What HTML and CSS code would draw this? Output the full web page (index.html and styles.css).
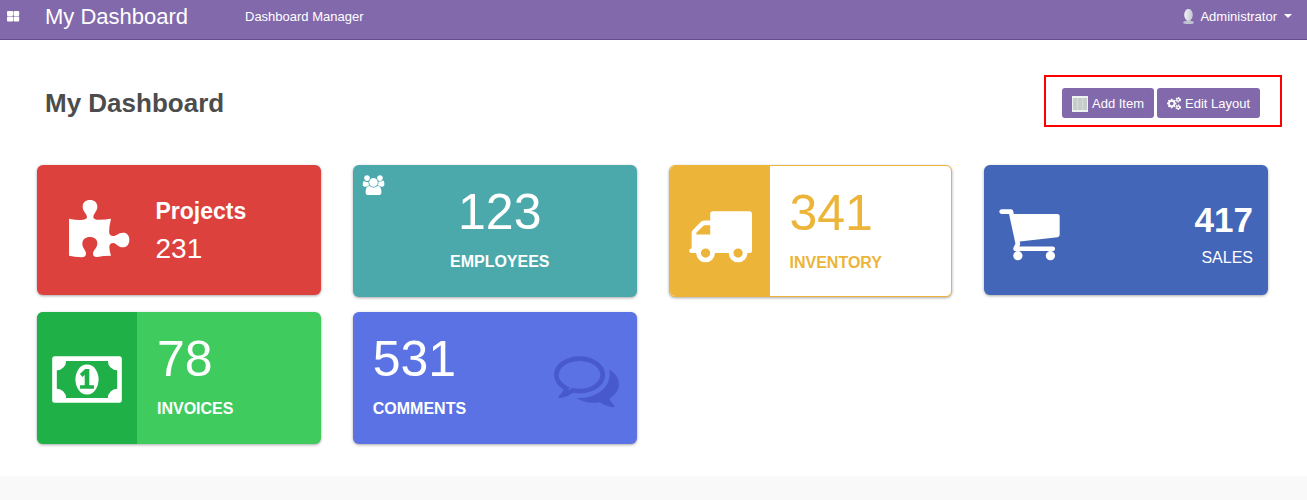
FILE: index.html
```html
<!DOCTYPE html>
<html lang="en">
<head>
<meta charset="utf-8">
<title>My Dashboard</title>
<link rel="stylesheet" href="styles.css">
</head>
<body>
<header class="navbar">
  <svg class="apps" viewBox="0 0 13 11"><rect x="0" y="0" width="6" height="5" rx="1"/><rect x="6.5" y="0" width="5.700" height="5" rx="1"/><rect x="0" y="5.600" width="6" height="4.900" rx="1"/><rect x="6.500" y="5.600" width="5.700" height="4.900" rx="1"/></svg>
  <span class="brand">My Dashboard</span>
  <span class="menu">Dashboard Manager</span>
  <span class="user">
    <svg class="avatar" viewBox="0 0 11 15"><defs><linearGradient id="silver"><stop offset="0" stop-color="#f2f3f4"/><stop offset="1" stop-color="#c3c7d0"/></linearGradient></defs><ellipse cx="5.500" cy="13.400" rx="5.400" ry="1.600" fill="#c0c3d1"/><path d="M3.500 10h4v3h-4z" fill="#bfc3cd"/><ellipse cx="5.500" cy="5.800" rx="4.300" ry="5.900" fill="url(#silver)"/></svg>
    <span>Administrator</span>
    <i class="caret"></i>
  </span>
</header>
<main class="page">
  <div class="heading">
    <h1>My Dashboard</h1>
    <div class="actions">
      <button class="btn add"><svg class="table-icon" viewBox="0 0 16 16"><path fill="#eef3f0" d="M0 0h16v16H0z"/><path fill="#c6ccc9" d="M1 2h14v12H1z"/><path stroke="#dce2df" stroke-width=".8" d="M5.700 2v12M10.400 2v12"/></svg><span>Add Item</span></button>
      <button class="btn edit"><svg class="cogs" viewBox="0 0 1920 1792"><path fill-rule="evenodd" d="M896 896q0-106-75-181t-181-75-181 75-75 181 75 181 181 75 181-75 75-181zm384-91v185q0 10-7 19.500t-16 10.500l-155 24q-11 35-32 76 34 48 90 115 7 11 7 20 0 12-7 19-23 30-82.500 89.500t-78.500 59.500q-11 0-21-7l-115-90q-37 19-77 31-11 108-23 155-7 24-30 24h-186q-11 0-20-7.500t-10-17.500l-23-153q-34-10-75-31l-118 89q-7 7-20 7-11 0-21-8-144-133-144-160 0-9 7-19 10-14 41-53t47-61q-23-44-35-82l-152-24q-10-1-17-9.500t-7-19.500v-185q0-10 7-19.500t16-10.500l155-24q11-35 32-76-34-48-90-115-7-11-7-20 0-12 7-20 22-30 82-89t79-59q11 0 21 7l115 90q34-18 77-32 11-108 23-154 7-24 30-24h186q11 0 20 7.500t10 17.500l23 153q34 10 75 31l118-89q8-7 20-7 11 0 21 8 144 133 144 160 0 8-7 19-12 16-42 54t-45 60q23 48 34 82l152 23q10 2 17 10.500t7 19.500z"/><g fill="none" stroke="#fff"><circle cx="1536" cy="384" r="200" stroke-width="170"/><circle cx="1536" cy="1408" r="200" stroke-width="170"/><circle cx="1536" cy="384" r="320" stroke-width="140" stroke-dasharray="190 145.100"/><circle cx="1536" cy="1408" r="320" stroke-width="140" stroke-dasharray="190 145.100"/></g></svg><span>Edit Layout</span></button>
    </div>
  </div>
  <section class="grid">
    <article class="card projects">
      <svg class="puzzle" viewBox="114 132 186 180"><path d="M117 191Q145 197 160 194Q170 193 171 187C171 175 158 170 158 155C158 142 167 135 180 135C193 135 202 143 202 155C202 169 190 175 190 186Q190 193 200 194Q222 195 243 191Q236 220 238 235Q240 243 249 243C261 243 264 233 279 233C291 233 298 241 298 254C298 267 291 277 278 277C264 277 260 265 249 264Q239 264 238 275Q238 287 243 302Q219 302 202 306Q189 307 189 296C189 285 202 280 202 265C202 253 193 246 180 246C166 246 157 253 157 266C157 280 168 285 168 295Q168 307 155 307Q134 306 117 302Z"/></svg>
      <div class="text"><b>Projects</b><span>231</span></div>
    </article>
    <article class="card employees">
      <svg class="users" viewBox="0 0 2048 1792"><path d="M657 896q-162 5-265 128h-134q-82 0-138-40.500t-56-118.500q0-353 124-353 6 0 43.500 21t97.500 42.500 119 21.500q67 0 133-23-5 37-5 66 0 159 90 287zm1071 637q0 120-73 189.500t-194 69.500h-874q-121 0-194-69.500t-73-189.500q0-53 3.500-103.500t14-109 26.500-108.500 43-97.500 62-81 85.500-53.500 111.500-20q10 0 43 21.500t73 48 107 48 135 21.500 135-21.500 107-48 73-48 43-21.500q61 0 111.500 20t85.500 53.500 62 81 43 97.500 26.500 108.500 14 109 3.500 103.500zm-1024-1277q0 106-75 181t-181 75-181-75-75-181 75-181 181-75 181 75 75 181zm704 384q0 159-112.500 271.500t-271.500 112.500-271.500-112.500-112.500-271.500 112.500-271.500 271.500-112.500 271.500 112.500 112.500 271.500zm576 225q0 78-56 118.500t-138 40.500h-134q-103-123-265-128 90-128 90-287 0-29-5-66 66 23 133 23 59 0 119-21.500t97.500-42.500 43.500-21q124 0 124 353zm-128-609q0 106-75 181t-181 75-181-75-75-181 75-181 181-75 181 75 75 181z"/></svg>
      <div class="text"><span class="count">123</span><b class="label">EMPLOYEES</b></div>
    </article>
    <article class="card inventory">
      <div class="side"><svg class="icon" viewBox="0 0 1792 1792"><path d="M640 1408q0-52-38-90t-90-38-90 38-38 90 38 90 90 38 90-38 38-90zm-384-512h384v-256h-158q-13 0-22 9l-195 195q-9 9-9 22v30zm1280 512q0-52-38-90t-90-38-90 38-38 90 38 90 90 38 90-38 38-90zm256-1088v1024q0 15-4 26.500t-13.500 18.500-16.500 11.500-23.500 6-22.500 2-25.500 0-22.500-.5q0 106-75 181t-181 75-181-75-75-181h-384q0 106-75 181t-181 75-181-75-75-181h-64q-3 0-22.500.5t-25.500 0-22.500-2-23.500-6-16.500-11.500-13.500-18.500-4-26.500q0-26 19-45t45-19v-320q0-8-.5-35t0-38 2.500-34.500 6.500-37 14-30.500 22.500-30l198-198q19-19 50.500-32t58.500-13h160v-192q0-26 19-45t45-19h1024q26 0 45 19t19 45z"/></svg></div>
      <div class="text"><span class="count">341</span><b class="label">INVENTORY</b></div>
    </article>
    <article class="card sales">
      <svg class="icon" viewBox="0 0 1792 1792"><path d="M704 1536q0 52-38 90t-90 38-90-38-38-90 38-90 90-38 90 38 38 90zm896 0q0 52-38 90t-90 38-90-38-38-90 38-90 90-38 90 38 38 90zm128-1088v512q0 24-16.500 42.500t-40.500 21.500l-1044 122q13 60 13 70 0 16-24 64h920q26 0 45 19t19 45-19 45-45 19h-1024q-26 0-45-19t-19-45q0-11 8-31.500t16-36 21.500-40 15.500-29.500l-177-823h-204q-26 0-45-19t-19-45 19-45 45-19h256q16 0 28.500 6.500t19.500 15.500 13 24.500 8 26 5.500 29.500 4.500 26h1201q26 0 45 19t19 45z"/></svg>
      <div class="text"><b>417</b><span>SALES</span></div>
    </article>
    <article class="card invoices">
      <div class="side"><svg class="icon money" viewBox="0 0 1920 1792"><path d="M768 1152h384v-96h-128v-448h-114l-148 137 77 80q42-37 55-57h2v288h-128v96zm512-256q0 70-21 142t-59.500 134-101.500 101-138 39-138-39-101.500-101-59.500-134-21-142 21-142 59.500-134 101.500-101 138-39 138 39 101.500 101 59.500 134 21 142zm512 256v-512q-106 0-181-75t-75-181h-1152q0 106-75 181t-181 75v512q106 0 181 75t75 181h1152q0-106 75-181t181-75zm128-832v1152q0 26-19 45t-45 19h-1792q-26 0-45-19t-19-45v-1152q0-26 19-45t45-19h1792q26 0 45 19t19 45z"/></svg></div>
      <div class="text"><span class="count">78</span><b class="label">INVOICES</b></div>
    </article>
    <article class="card comments">
      <div class="text"><span class="count">531</span><b class="label">COMMENTS</b></div>
      <svg class="icon" viewBox="0 0 1792 1792"><path d="M704 384q-153 0-286 52t-211.500 141-78.500 191q0 82 53 158t149 132l97 56-35 84q34-20 62-39l44-31 53 10q78 14 153 14 153 0 286-52t211.500-141 78.500-191-78.500-191-211.500-141-286-52zm0-128q191 0 353.500 68.500t256.500 186.500 94 257-94 257-256.500 186.500-353.500 68.500q-86 0-176-16-124 88-278 128-36 9-86 16h-3q-11 0-20.500-8t-11.500-21q-1-3-1-6.500t.5-6.500 2-6l2.500-5 3.500-5.500 4-5 4.500-5 4-4.500q5-6 23-25t26-29.500 22.500-29 25-38.500 20.500-44q-124-72-195-177t-71-224q0-139 94-257t256.500-186.500 353.500-68.500zm822 1169q10 24 20.500 44t25 38.500 22.500 29 26 29.500 23 25q1 1 4 4.500t4.500 5 4 5 3.500 5.500l2.500 5 2 6 .5 6.500-1 6.500q-3 14-13 22t-22 7q-50-7-86-16-154-40-278-128-90 16-176 16-271 0-472-132 58 4 88 4 161 0 309-45t264-129q125-92 192-212t67-254q0-77-23-152 129 71 204 178t75 230q0 120-71 224.500t-195 176.500z"/></svg>
    </article>
  </section>
</main>
</body>
</html>
```

FILE: styles.css
```css
* { box-sizing: border-box; }
body {
  margin: 0;
  min-height: 500px;
  background: #f9f9f9;
  color: #fff;
  font: 13px/20px "Liberation Sans", Arial, sans-serif;
}
svg { display: block; flex: none; fill: #fff; }

.navbar {
  display: flex;
  align-items: flex-start;
  height: 40px;
  padding: 6px 15px 0 7px;
  background: #8269ac;
  border-bottom: 1px solid #644b92;
}
.apps { width: 13px; height: 11px; margin: 4.500px 25px 0 0; }
.brand { width: 200px; font-size: 22px; line-height: 21px; }
.menu { margin-top: 1px; }
.user { display: flex; margin: 1px 0 0 auto; }
.avatar { width: 11px; height: 15px; margin: 2px 6px 0 0; }
.caret {
  width: 8px;
  margin: 7px 0 0 7px;
  border: 4px solid transparent;
  border-top-color: #fff;
  border-bottom: 0;
  height: 4px;
}

.page { height: 436px; background: #fff; }
.heading {
  display: flex;
  justify-content: space-between;
  padding: 35px 25px 0 45px;
}
h1 { margin: 13px 0 0; font-size: 26px; line-height: 30px; color: #4c4c4c; }
.actions {
  display: flex;
  gap: 3px;
  width: 238px;
  height: 52px;
  padding: 11px 0 0 16px;
  border: 2px solid #f00;
}
.btn {
  display: flex;
  align-items: center;
  height: 30px;
  padding: 0 0 0 10px;
  border: 0;
  border-radius: 3px;
  background: #8269ac;
  color: #fff;
  font: 13px/20px "Liberation Sans", Arial, sans-serif;
  white-space: nowrap;
}
.btn span { padding-top: 2px; }
.add { width: 92px; }
.edit { width: 103px; }
.table-icon { width: 16px; height: 16px; margin: 1px 4px 0 0; }
.cogs { width: 14px; height: 13px; margin-right: 4px; }

.grid {
  display: grid;
  grid-template-columns: repeat(4, minmax(0, 1fr));
  grid-auto-rows: 132px;
  gap: 15px 32px;
  align-items: start;
  padding: 38px 39px 0 37px;
}
.card {
  display: flex;
  height: 132px;
  overflow: hidden;
  border-radius: 6px;
  box-shadow: 0 1px 3px rgba(0, 0, 0, .35);
}
.text { display: flex; flex-direction: column; }
.icon { width: 65px; height: 65px; }
.count { font-size: 50px; line-height: 58px; }
.label { margin-top: 11px; font-size: 16px; line-height: 20px; }
.side { flex: none; width: 100px; }

.projects { height: 130px; background: #dd413e; }
.puzzle { width: 62px; height: 60px; margin: 34px 25.500px 0 31px; }
.projects b { margin-top: 32px; font-size: 23px; line-height: 28px; }
.projects span { margin-top: 8px; font-size: 28px; line-height: 32px; }

.employees { background: #4ba9ab; }
.users { width: 23px; height: 20.500px; margin: 9.500px 0 0 9.500px; }
.employees .text { width: 217px; padding-top: 18px; align-items: center; margin-left: 6px; }

.inventory { border: 1px solid #ecb539; background: #fff; color: #ecb539; }
.inventory .side { padding: 35.500px 0 0 17.500px; background: #ecb539; }
.inventory .text { padding: 18px 0 0 20px; }

.sales { height: 130px; justify-content: space-between; padding: 0 15px 0 12.500px; background: #4466b8; }
.sales .icon { margin-top: 35px; }
.sales .text { align-items: flex-end; padding-top: 35px; }
.sales b { font-size: 35px; line-height: 40px; }
.sales span { margin-top: 8px; font-size: 16px; line-height: 20px; }

.invoices { background: #40cb5f; }
.invoices .side { padding: 35px 0 0 15px; background: #1fb047; }
.invoices .money { width: 70px; }
.invoices .text { padding: 18px 0 0 20px; }

.comments { justify-content: space-between; padding: 18px 17.500px 0 20px; background: #5b72e4; }
.comments .icon { margin-top: 17px; fill: #4859cd; }
```
